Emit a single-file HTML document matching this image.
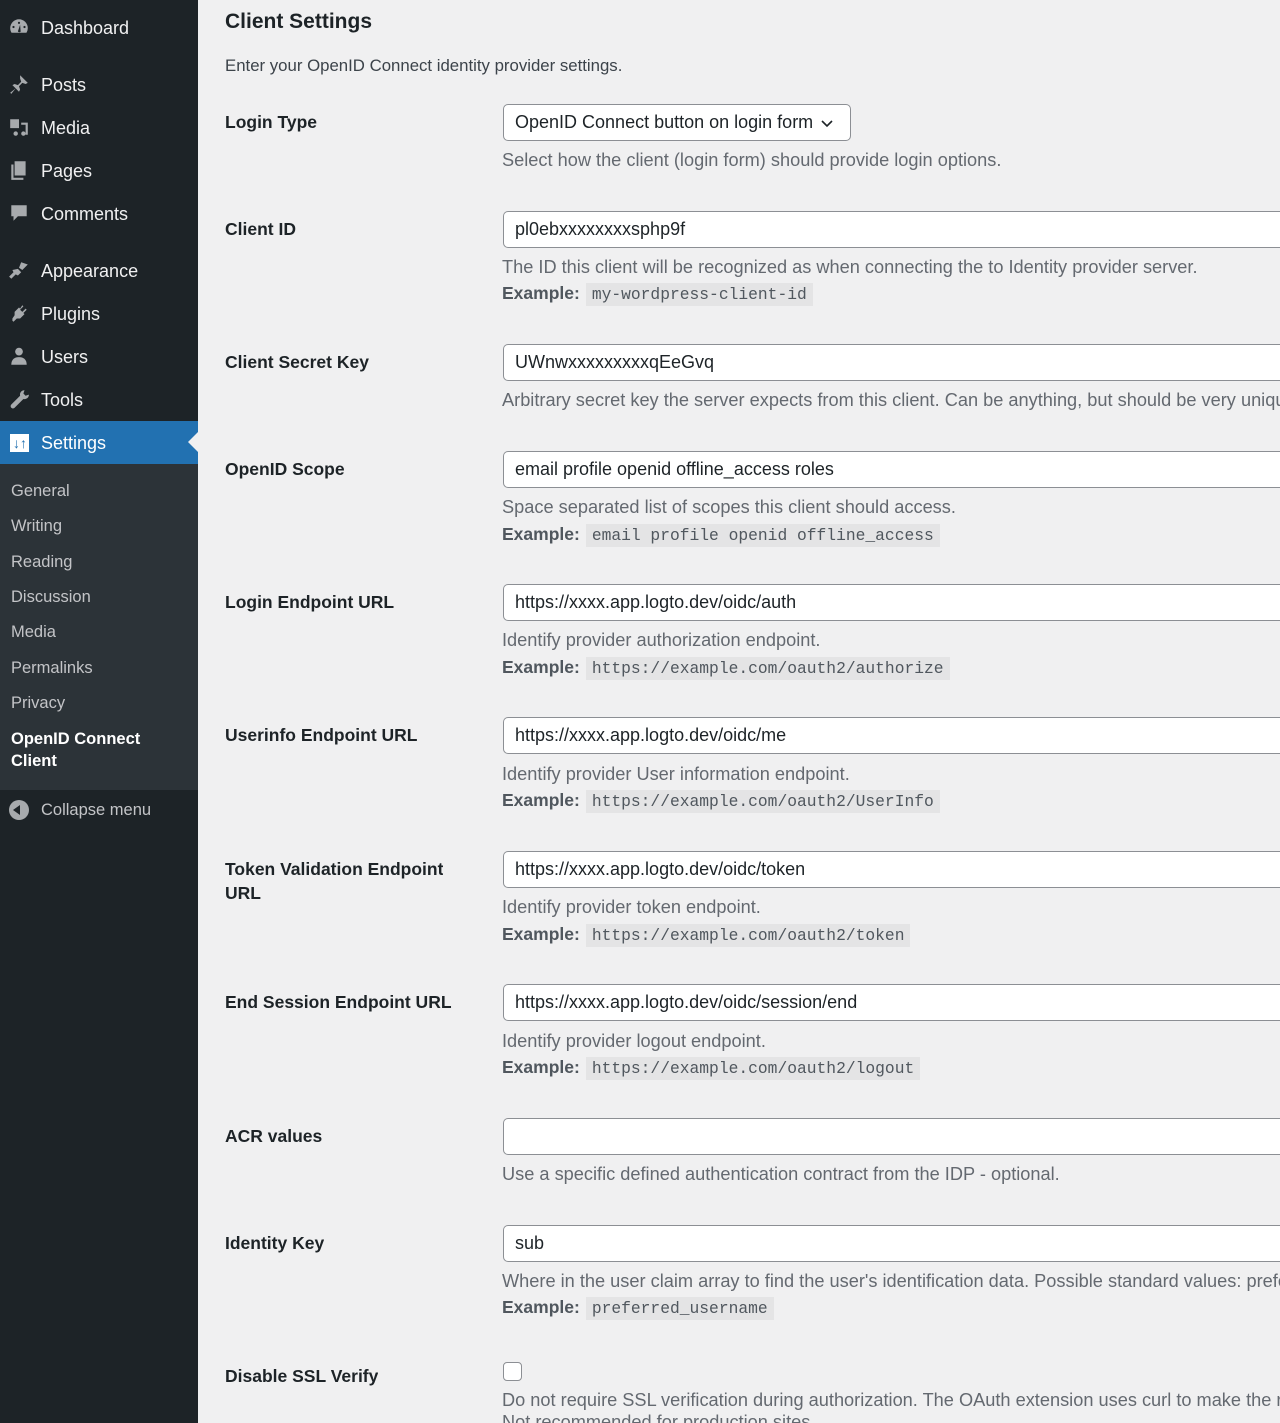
<!DOCTYPE html>
<html style="overflow:hidden;width:1280px;height:1423px"><head><meta charset="utf-8"><style>
*{margin:0;padding:0;box-sizing:border-box}
body{width:1280px;height:1423px;overflow:hidden;background:#f0f0f1;font-family:"Liberation Sans",sans-serif;position:relative;color:#1d2327}
#w{position:absolute;left:0;top:0;width:1280px;height:1423px;overflow:hidden}
.sb{position:absolute;left:0;top:0;width:198px;height:1423px;background:#1d2327}
.m{position:absolute;left:41px;font-size:18px;color:#f0f0f1;line-height:24px}
.ic{position:absolute;left:8px;width:22px;height:22px}
.sub{position:absolute;left:0;top:464px;width:198px;height:326px;background:#2c3338}
.s{position:absolute;left:11px;font-size:16.5px;color:#c3c4c7;line-height:22px}
.a{position:absolute;white-space:nowrap;overflow:hidden}
.l{left:225px;font-size:17.5px;font-weight:bold;line-height:24px}
.d{left:502px;right:0;font-size:18.2px;color:#646970;line-height:24px}
.in{position:absolute;left:503px;width:777px;height:37px;background:#fff;border:1px solid #8c8f94;border-right:none;border-radius:5px 0 0 5px;font-size:18px;line-height:35px;padding-left:11px;color:#1d2327;white-space:nowrap;overflow:hidden}
.ex{left:502px;font-size:17.5px;line-height:26px;color:#646970}
.ex b{color:#50575e}
code{font-family:"Liberation Mono",monospace;font-size:16.3px;background:#e4e4e5;padding:2px 6px;margin-left:6px;color:#50575e}
</style></head><body><div id="w">
<div class="sb">
<svg class="ic" style="top:16px" viewBox="0 0 20 20"><path fill="#a7aaad" d="M10 3a8 8 0 0 0-8 8c0 1.6.5 3 1.2 4.2h13.6A8 8 0 0 0 18 11a8 8 0 0 0-8-8zm0 2.2a1 1 0 1 1 0 2 1 1 0 0 1 0-2zM5 9a1 1 0 1 1 0 2 1 1 0 0 1 0-2zm10 0a1 1 0 1 1 0 2 1 1 0 0 1 0-2zM9 14l2-6 .5 6.2A1.5 1.5 0 0 1 9 14z"/></svg>
<div class="m" style="top:16px">Dashboard</div>
<svg class="ic" style="top:73px" viewBox="0 0 20 20"><path fill="#a7aaad" d="M11 2l7 7-2 1-3-1-3 3 1 3-1 2-3-3-4 5-1-1 5-4-3-3 2-1 3 1 3-3-1-3z"/></svg>
<div class="m" style="top:73px">Posts</div>
<svg class="ic" style="top:116px" viewBox="0 0 20 20"><path fill="#a7aaad" d="M2 3h8v8H2zM12 6h6v11h-2V8h-4zM7 14a2 2 0 1 1 0 4 2 2 0 0 1 0-4zM14 14a2 2 0 1 1 0 4 2 2 0 0 1 0-4z"/></svg>
<div class="m" style="top:116px">Media</div>
<svg class="ic" style="top:159px" viewBox="0 0 20 20"><path fill="#a7aaad" d="M6 2h10v13H6zM3 5h2v12h9v2H3z"/></svg>
<div class="m" style="top:159px">Pages</div>
<svg class="ic" style="top:202px" viewBox="0 0 20 20"><path fill="#a7aaad" d="M3 3h14v10H9l-4 4v-4H3z"/></svg>
<div class="m" style="top:202px">Comments</div>
<svg class="ic" style="top:259px" viewBox="0 0 20 20"><path fill="#a7aaad" d="M12 3l6 2-5 5-3-2zM9 9l3 3-3 3-2-1-4 4-2-2 4-4-1-2z"/></svg>
<div class="m" style="top:259px">Appearance</div>
<svg class="ic" style="top:302px" viewBox="0 0 20 20"><path fill="#a7aaad" d="M13 3l1 1-3 3 2 2 3-3 1 1-3 3 1 1-4 4-3 0-3 3-1-1 0-2 2-3 0-3 4-4 1 1z"/></svg>
<div class="m" style="top:302px">Plugins</div>
<svg class="ic" style="top:345px" viewBox="0 0 20 20"><circle cx="10" cy="6" r="3.5" fill="#a7aaad"/><path fill="#a7aaad" d="M3 18c0-5 3-7 7-7s7 2 7 7z"/></svg>
<div class="m" style="top:345px">Users</div>
<svg class="ic" style="top:388px" viewBox="0 0 20 20"><path fill="#a7aaad" d="M15 2a4 4 0 0 0-4 5L3 15a2 2 0 0 0 3 3l8-8a4 4 0 0 0 5-4l-3 1-2-2 1-3z"/></svg>
<div class="m" style="top:388px">Tools</div>
<div style="position:absolute;left:0;top:421px;width:198px;height:43px;background:#2271b1"></div>
<div style="position:absolute;left:188px;top:432px;width:0;height:0;border-top:10px solid transparent;border-bottom:10px solid transparent;border-right:10px solid #f0f0f1"></div>
<div style="position:absolute;left:10px;top:434px;width:19px;height:18px;background:#fff"><span style="position:absolute;left:3px;top:0;color:#2271b1;font-weight:bold;font-size:14px;line-height:18px">↓↑</span></div>
<div class="m" style="top:431px;color:#fff">Settings</div>
<div class="sub">
<div class="s" style="top:16px">General</div>
<div class="s" style="top:51px">Writing</div>
<div class="s" style="top:87px">Reading</div>
<div class="s" style="top:122px">Discussion</div>
<div class="s" style="top:157px">Media</div>
<div class="s" style="top:193px">Permalinks</div>
<div class="s" style="top:228px">Privacy</div>
<div class="s" style="top:264px;color:#fff;font-weight:bold">OpenID Connect<br>Client</div>
</div>
<div style="position:absolute;left:9px;top:800px;width:20px;height:20px;border-radius:50%;background:#a7aaad"></div>
<div style="position:absolute;left:13px;top:805px;width:0;height:0;border-top:5px solid transparent;border-bottom:5px solid transparent;border-right:7px solid #1d2327"></div>
<div class="m" style="top:798px;font-size:16.5px;color:#c3c4c7">Collapse menu</div>
</div>

<div class="a" style="left:225px;top:8px;font-size:21px;font-weight:bold;line-height:28px">Client Settings</div>
<div class="a d" style="left:225px;top:54px;color:#3c434a;font-size:16.8px">Enter your OpenID Connect identity provider settings.</div>

<div class="a l" style="top:110px">Login Type</div>
<div class="in" style="top:104px;width:348px;border-right:1px solid #8c8f94;border-radius:5px">OpenID Connect button on login form <svg width="12" height="8" viewBox="0 0 12 8" style="margin-left:3px"><path d="M1 1l5 5 5-5" stroke="#1d2327" stroke-width="1.6" fill="none"/></svg></div>
<div class="a d" style="top:148px">Select how the client (login form) should provide login options.</div>

<div class="a l" style="top:217px">Client ID</div>
<div class="in" style="top:211px">pl0ebxxxxxxxxsphp9f</div>
<div class="a d" style="top:255px">The ID this client will be recognized as when connecting the to Identity provider server.</div>
<div class="a ex" style="top:280px"><b>Example:</b><code>my-wordpress-client-id</code></div>

<div class="a l" style="top:350px">Client Secret Key</div>
<div class="in" style="top:344px">UWnwxxxxxxxxxqEeGvq</div>
<div class="a d" style="top:388px">Arbitrary secret key the server expects from this client. Can be anything, but should be very unique.</div>

<div class="a l" style="top:457px">OpenID Scope</div>
<div class="in" style="top:451px">email profile openid offline_access roles</div>
<div class="a d" style="top:495px">Space separated list of scopes this client should access.</div>
<div class="a ex" style="top:521px"><b>Example:</b><code>email profile openid offline_access</code></div>

<div class="a l" style="top:590px">Login Endpoint URL</div>
<div class="in" style="top:584px">https://xxxx.app.logto.dev/oidc/auth</div>
<div class="a d" style="top:628px">Identify provider authorization endpoint.</div>
<div class="a ex" style="top:654px"><b>Example:</b><code>https://example.com/oauth2/authorize</code></div>

<div class="a l" style="top:723px">Userinfo Endpoint URL</div>
<div class="in" style="top:717px">https://xxxx.app.logto.dev/oidc/me</div>
<div class="a d" style="top:762px">Identify provider User information endpoint.</div>
<div class="a ex" style="top:787px"><b>Example:</b><code>https://example.com/oauth2/UserInfo</code></div>

<div class="a l" style="top:857px">Token Validation Endpoint<br>URL</div>
<div class="in" style="top:851px">https://xxxx.app.logto.dev/oidc/token</div>
<div class="a d" style="top:895px">Identify provider token endpoint.</div>
<div class="a ex" style="top:921px"><b>Example:</b><code>https://example.com/oauth2/token</code></div>

<div class="a l" style="top:990px">End Session Endpoint URL</div>
<div class="in" style="top:984px">https://xxxx.app.logto.dev/oidc/session/end</div>
<div class="a d" style="top:1029px">Identify provider logout endpoint.</div>
<div class="a ex" style="top:1054px"><b>Example:</b><code>https://example.com/oauth2/logout</code></div>

<div class="a l" style="top:1124px">ACR values</div>
<div class="in" style="top:1118px"></div>
<div class="a d" style="top:1162px">Use a specific defined authentication contract from the IDP - optional.</div>

<div class="a l" style="top:1231px">Identity Key</div>
<div class="in" style="top:1225px">sub</div>
<div class="a d" style="top:1269px">Where in the user claim array to find the user's identification data. Possible standard values: preferred_username</div>
<div class="a ex" style="top:1294px"><b>Example:</b><code>preferred_username</code></div>

<div class="a l" style="top:1364px">Disable SSL Verify</div>
<div style="position:absolute;left:503px;top:1362px;width:19px;height:19px;border:1px solid #8c8f94;border-radius:4px;background:#fff"></div>
<div class="a d" style="top:1388px">Do not require SSL verification during authorization. The OAuth extension uses curl to make the request.</div>
<div class="a d" style="top:1410px;height:13px">Not recommended for production sites.</div>
</div></body></html>
